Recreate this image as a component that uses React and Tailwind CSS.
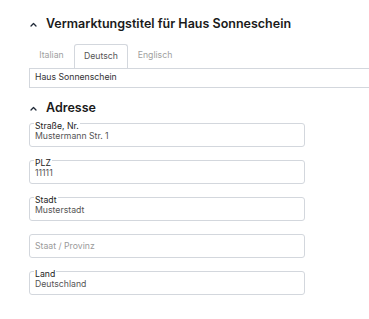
import React from "react";

function Caret() {
  return (
    <svg width="7" height="5" viewBox="0 0 7 5" className="block">
      <path d="M1 4 L3.5 1.5 L6 4" fill="none" stroke="#1f2937" strokeWidth="1.3" strokeLinecap="round" strokeLinejoin="round" />
    </svg>
  );
}

function Field({ label, value, placeholder }) {
  return (
    <div className="relative w-[276px] h-[24px] rounded-[3px] border border-[#d3d7dd] flex items-center pl-[5px]">
      {label && (
        <span className="absolute left-[4px] top-[-3px] bg-white px-[1px] text-[8.7px] leading-[10px] text-[#222]">
          {label}
        </span>
      )}
      {value ? (
        <span className="text-[8.7px] leading-[10px] text-[#555] pt-[1px]">{value}</span>
      ) : (
        <span className="text-[8.7px] leading-[10px] text-[#9a9a9a]">{placeholder}</span>
      )}
    </div>
  );
}

export default function App() {
  return (
    <div className="w-[369px] h-[319px] overflow-hidden bg-white pl-[29px] pt-[16px]" style={{ fontFamily: "Inter, 'Noto Sans', sans-serif" }}>
      <div className="flex items-center h-[16px]">
        <div className="ml-[1px] w-[16px]"><Caret /></div>
        <span className="text-[12.5px] font-semibold text-[#1a1a1a]">Vermarktungstitel für Haus Sonneschein</span>
      </div>
      <div className="mt-[12px] flex h-[24px] items-stretch">
        <div className="w-[45px] flex items-center justify-center text-[8.7px] text-[#a0a0a0]">Italian</div>
        <div className="w-[54px] flex items-center justify-center text-[8.7px] text-[#555] border border-b-0 border-[#d3d7dd] rounded-t-[3px]">Deutsch</div>
        <div className="w-[54px] flex items-center justify-center text-[8.7px] text-[#a0a0a0]">Englisch</div>
      </div>
      <div className="w-[370px] h-[20px] border border-[#d3d7dd] flex items-center pl-[5px] text-[8.7px] text-[#333]">
        Haus Sonnenschein
      </div>
      <div className="mt-[12px] flex items-center h-[16px]">
        <div className="ml-[1px] w-[16px]"><Caret /></div>
        <span className="text-[12.5px] font-semibold text-[#1a1a1a]">Adresse</span>
      </div>
      <div className="mt-[7px] flex flex-col gap-[13px]">
        <Field label="Straße, Nr." value="Mustermann Str. 1" />
        <Field label="PLZ" value="11111" />
        <Field label="Stadt" value="Musterstadt" />
        <Field placeholder="Staat / Provinz" />
        <Field label="Land" value="Deutschland" />
      </div>
    </div>
  );
}
